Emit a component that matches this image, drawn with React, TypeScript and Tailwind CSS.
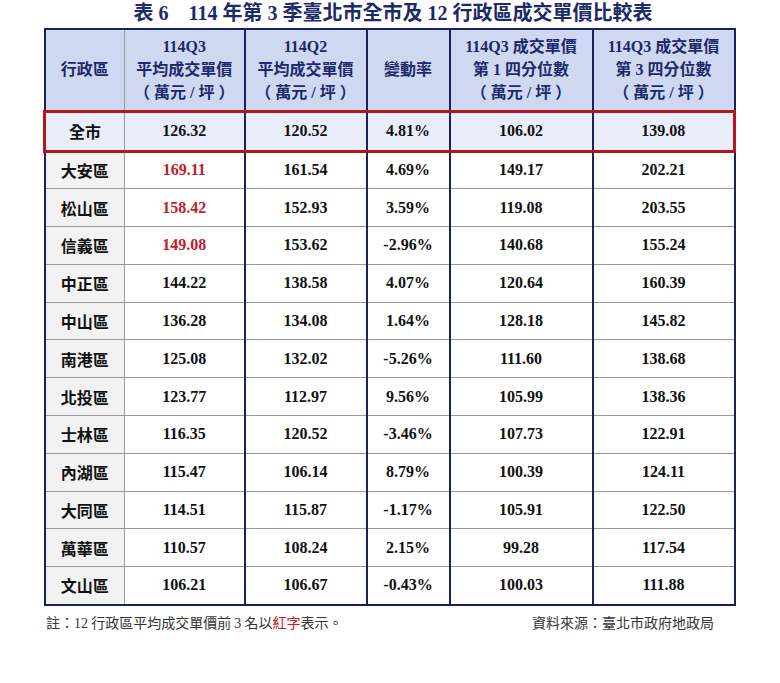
import React from "react";

type Row = { name: string; q3: string; q2: string; rate: string; p1: string; p3: string; top?: boolean };

const rows: Row[] = [
  { name: "大安區", q3: "169.11", q2: "161.54", rate: "4.69%", p1: "149.17", p3: "202.21", top: true },
  { name: "松山區", q3: "158.42", q2: "152.93", rate: "3.59%", p1: "119.08", p3: "203.55", top: true },
  { name: "信義區", q3: "149.08", q2: "153.62", rate: "-2.96%", p1: "140.68", p3: "155.24", top: true },
  { name: "中正區", q3: "144.22", q2: "138.58", rate: "4.07%", p1: "120.64", p3: "160.39" },
  { name: "中山區", q3: "136.28", q2: "134.08", rate: "1.64%", p1: "128.18", p3: "145.82" },
  { name: "南港區", q3: "125.08", q2: "132.02", rate: "-5.26%", p1: "111.60", p3: "138.68" },
  { name: "北投區", q3: "123.77", q2: "112.97", rate: "9.56%", p1: "105.99", p3: "138.36" },
  { name: "士林區", q3: "116.35", q2: "120.52", rate: "-3.46%", p1: "107.73", p3: "122.91" },
  { name: "內湖區", q3: "115.47", q2: "106.14", rate: "8.79%", p1: "100.39", p3: "124.11" },
  { name: "大同區", q3: "114.51", q2: "115.87", rate: "-1.17%", p1: "105.91", p3: "122.50" },
  { name: "萬華區", q3: "110.57", q2: "108.24", rate: "2.15%", p1: "99.28", p3: "117.54" },
  { name: "文山區", q3: "106.21", q2: "106.67", rate: "-0.43%", p1: "100.03", p3: "111.88" },
];

const serif = "font-['Liberation_Serif','Noto_Sans_CJK_TC',serif]";
const sans = "font-['Noto_Sans_CJK_TC',sans-serif]";

export default function App() {
  return (
    <div className="w-[780px] h-[683px] bg-white text-[#111]">
      {/* 標題 */}
      <h1 className={`${serif} text-center text-[20px] leading-[27px] font-bold text-[#1c2a6a] pl-[6px]`}>
        表 6　114 年第 3 季臺北市全市及 12 行政區成交單價比較表
      </h1>

      {/* 表格 */}
      <table className={`${serif} ml-[43px] mt-[1px] w-[690px] table-fixed border-collapse border-2 border-[#1a2259] text-center font-bold`}>
        <colgroup>
          <col className="w-[80px]" />
          <col className="w-[120px]" />
          <col className="w-[122px]" />
          <col className="w-[83px]" />
          <col className="w-[143px]" />
          <col className="w-[142px]" />
        </colgroup>
        <thead>
          <tr className="h-[82px] bg-[#cfd8f1] text-[#1c2a6a] text-[16px] leading-[23px]">
            <th className="border-r border-r-[#9a9a9a]">行政區</th>
            <th className="border-r-2 border-r-[#1a2259]">114Q3<br />平均成交單價<br />（ 萬元 / 坪 ）</th>
            <th className="border-r-2 border-r-[#1a2259]">114Q2<br />平均成交單價<br />（ 萬元 / 坪 ）</th>
            <th className="border-r-2 border-r-[#1a2259]">變動率</th>
            <th className="border-r-2 border-r-[#1a2259]">114Q3 成交單價<br />第 1 四分位數<br />（ 萬元 / 坪 ）</th>
            <th>114Q3 成交單價<br />第 3 四分位數<br />（ 萬元 / 坪 ）</th>
          </tr>
        </thead>
        <tbody className="text-[16px]">
          {/* 全市 */}
          <tr className="h-[40px] bg-[#e9edf9]">
            <td className={`${sans} border-y-[3px] border-y-[#b3161e] border-l-[3px] border-l-[#b3161e] border-r border-r-[#9a9a9a]`}>全市</td>
            <td className="border-y-[3px] border-y-[#b3161e] border-r-2 border-r-[#1a2259]">126.32</td>
            <td className="border-y-[3px] border-y-[#b3161e] border-r-2 border-r-[#1a2259]">120.52</td>
            <td className="border-y-[3px] border-y-[#b3161e] border-r-2 border-r-[#1a2259]">4.81%</td>
            <td className="border-y-[3px] border-y-[#b3161e] border-r-2 border-r-[#1a2259]">106.02</td>
            <td className="border-y-[3px] border-y-[#b3161e] border-r-[3px] border-r-[#b3161e]">139.08</td>
          </tr>
          {rows.map((r) => (
            <tr key={r.name} className="h-[37.8px] border-t border-t-[#9a9a9a]">
              <td className={`${sans} bg-[#f2f2f2] border-r border-r-[#9a9a9a]`}>{r.name}</td>
              <td className={`border-r-2 border-r-[#1a2259] ${r.top ? "text-[#c0202b]" : ""}`}>{r.q3}</td>
              <td className="border-r-2 border-r-[#1a2259]">{r.q2}</td>
              <td className="border-r-2 border-r-[#1a2259]">{r.rate}</td>
              <td className="border-r-2 border-r-[#1a2259]">{r.p1}</td>
              <td>{r.p3}</td>
            </tr>
          ))}
        </tbody>
      </table>

      {/* 註解 */}
      <div className={`${sans} ml-[46px] mr-[66px] mt-[6px] flex justify-between text-[14px] leading-[20px] text-[#333]`}>
        <span>
          註：<span className="font-['Liberation_Serif']">12</span> 行政區平均成交單價前 <span className="font-['Liberation_Serif']">3</span> 名以<span className="text-[#c0202b]">紅字</span>表示。
        </span>
        <span>資料來源：臺北市政府地政局</span>
      </div>
    </div>
  );
}
